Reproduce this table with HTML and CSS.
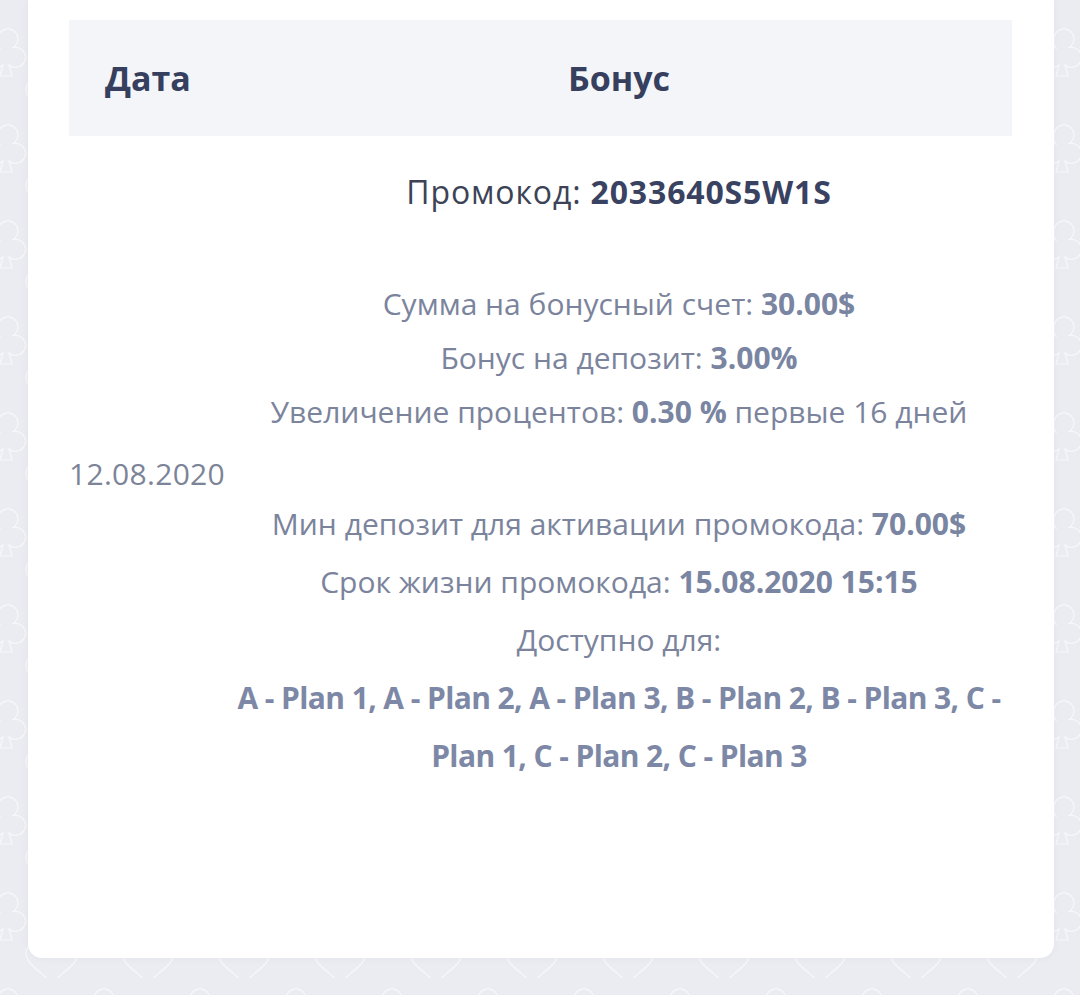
FILE: index.html
```html
<!DOCTYPE html>
<html lang="ru">
<head>
<meta charset="utf-8">
<title>Бонусы</title>
<link rel="stylesheet" href="styles.css">
</head>
<body>
<div class="page">
  <div class="card">
    <div class="table">
      <div class="head">
        <div class="head-date">Дата</div>
        <div class="head-bonus">Бонус</div>
      </div>
      <div class="row">
        <div class="date">12.08.2020</div>
        <div class="bonus">
          <div class="promo">Промокод: <b>2033640S5W1S</b></div>
          <div class="group1">
            <div>Сумма на бонусный счет: <b>30.00$</b></div>
            <div>Бонус на депозит: <b>3.00%</b></div>
            <div>Увеличение процентов: <b>0.30 %</b> первые 16 дней</div>
          </div>
          <div class="group2">
            <div>Мин депозит для активации промокода: <b>70.00$</b></div>
            <div>Срок жизни промокода: <b>15.08.2020 15:15</b></div>
            <div>Доступно для:</div>
            <div class="plans">
              <span class="plan-line">A - Plan 1, A - Plan 2, A - Plan 3, B - Plan 2, B - Plan 3, C -</span>
              <span class="plan-line">Plan 1, C - Plan 2, C - Plan 3</span>
            </div>
          </div>
        </div>
      </div>
    </div>
  </div>
</div>
</body>
</html>
```
FILE: styles.css
```css
html, body {
  margin: 0;
  padding: 0;
}

body {
  background-color: #ebecf1;
  background-image: url("data:image/svg+xml,%3Csvg xmlns='http://www.w3.org/2000/svg' width='96' height='96' viewBox='0 0 96 96'%3E%3Cg fill='none' stroke='%23ffffff' stroke-width='1.2' opacity='0.6'%3E%3Cpath d='M12 22 a10 10 0 1 1 14 8 a10 10 0 1 1 -3 17 l3 11 h-12 l3 -11 a10 10 0 1 1 -3 -17 a10 10 0 0 1 -2 -8 z'/%3E%3Cpath d='M66 74 c10 -14 26 -14 26 -3 c0 11 -14 18 -26 30 c-12 -12 -26 -19 -26 -30 c0 -11 16 -11 26 3 z'/%3E%3C/g%3E%3C/svg%3E");
  background-position: -14px 18px;
  font-family: "Open Sans", "Noto Sans", sans-serif;
}

.page {
  padding: 0 26px 37px 28px;
}

.card {
  background: #ffffff;
  border-radius: 0 0 14px 14px;
  padding: 20px 42px 148px 41px;
  box-shadow: 0 0 8px rgba(40, 50, 80, 0.04);
}

.head {
  display: grid;
  grid-template-columns: 157px 1fr;
  align-items: center;
  height: 116px;
  background: #f3f5f8;
  color: #363f5e;
  font-weight: 700;
  font-size: 34px;
}

.head-date {
  padding-left: 36px;
}

.head-bonus {
  text-align: center;
}

.row {
  display: grid;
  grid-template-columns: 157px 1fr;
}

.date {
  align-self: center;
  color: #7c8498;
  font-size: 30px;
  letter-spacing: 0.3px;
  white-space: nowrap;
}

.bonus {
  text-align: center;
  color: #7b849c;
  font-size: 30px;
  padding: 28px 0 25px;
}

.bonus b {
  font-weight: 700;
  color: #7a85a2;
}

.promo {
  line-height: 56px;
  color: #3c4356;
  font-size: 32px;
  letter-spacing: 0.85px;
}

.promo b {
  color: #394260;
}

.group1 {
  margin-top: 57px;
  line-height: 54px;
}

.group2 {
  margin-top: 56px;
  line-height: 58px;
}

.plans {
  font-weight: 700;
  color: #7d88a6;
  font-size: 30px;
  letter-spacing: -0.6px;
}

.plan-line {
  display: block;
  white-space: nowrap;
}
```
